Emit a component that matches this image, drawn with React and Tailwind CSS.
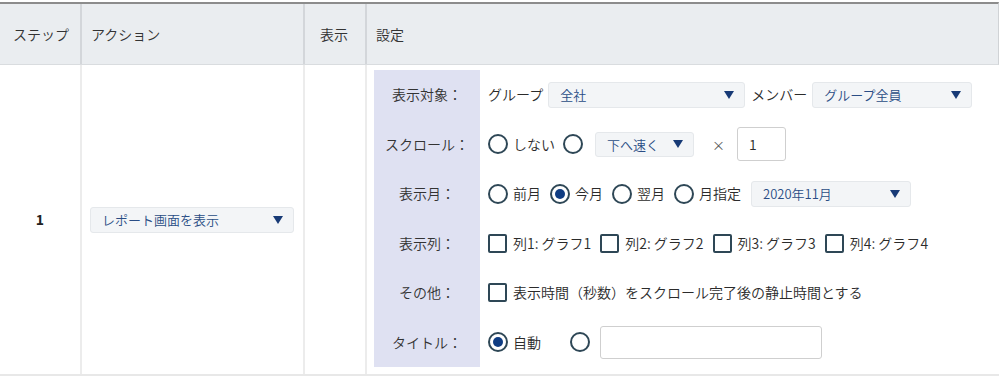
import React from 'react'

const font = { fontFamily: '"Noto Sans CJK JP", "Noto Sans", sans-serif' }

function Caret() {
  return (
    <svg width="10" height="8" viewBox="0 0 10 8" className="shrink-0">
      <path d="M0 0 H10 L5 8 Z" fill="#173a76" />
    </svg>
  )
}

function Select({ label, className }) {
  return (
    <div
      className={`flex items-center justify-between pl-[11px] pr-[10px] bg-[#f3f5f7] border border-[#e5e8eb] rounded-[3px] text-[13px] text-[#2a4d85] ${className}`}
    >
      <span>{label}</span>
      <Caret />
    </div>
  )
}

function Radio({ checked }) {
  return (
    <span className="w-[20px] h-[20px] rounded-full border-[2.5px] border-[#2e4756] flex items-center justify-center shrink-0">
      {checked && <span className="w-[10px] h-[10px] rounded-full bg-[#0f3c82]" />}
    </span>
  )
}

function Check() {
  return <span className="w-[19px] h-[19px] border-[2.5px] border-[#2e4756] rounded-[2px] shrink-0" />
}

function Row({ label, children }) {
  return (
    <div className="flex h-[49.5px]">
      <div className="w-[106px] shrink-0 bg-[#dfe1f2] flex items-center justify-center text-[14px] text-[#333]">
        {label}
      </div>
      <div className="flex items-center pl-[8px] text-[14px] text-[#2b2b2b]">{children}</div>
    </div>
  )
}

export default function App() {
  return (
    <div className="w-[1000px] h-[380px] bg-white pt-[2px] overflow-hidden font-[350]" style={font}>
      <div className="w-[999px]">
        {/* header */}
        <div className="flex h-[63px] border-t-2 border-[#8c8c8c] border-b border-b-[#d9dcdf] bg-[#eaedf0] text-[14px] text-[#333] border-r border-r-[#d0d3d6]">
          <div className="w-[80px] flex items-center pl-[13px]">ステップ</div>
          <div className="w-[223px] flex items-center pl-[9px] border-l-2 border-[#d3d6da]">アクション</div>
          <div className="w-[62px] flex items-center pl-[15px] border-l-2 border-[#d3d6da]">表示</div>
          <div className="flex-1 flex items-center pl-[9px] border-l-2 border-[#d3d6da]">設定</div>
        </div>

        {/* body */}
        <div className="flex h-[311px] border-b-2 border-[#e8e8e8]">
          <div className="w-[80px] flex items-center justify-center font-bold text-[14px] text-[#222]">1</div>
          <div className="w-[223px] flex items-center pl-[8px] border-l-2 border-[#ececec]">
            <Select label="レポート画面を表示" className="w-[204px] h-[26px]" />
          </div>
          <div className="w-[62px] border-l-2 border-[#ececec]" />
          <div className="flex-1 border-l-2 border-[#ececec] pl-[7px] pt-[5px]">
            <div className="flex flex-col">
              <Row label="表示対象：">
                <span>グループ</span>
                <Select label="全社" className="ml-[5px] w-[197px] h-[26px]" />
                <span className="ml-[6px]">メンバー</span>
                <Select label="グループ全員" className="ml-[5px] w-[160px] h-[26px]" />
              </Row>
              <Row label="スクロール：">
                <Radio />
                <span className="ml-[5px]">しない</span>
                <span className="ml-[8px]"><Radio /></span>
                <Select label="下へ速く" className="ml-[12px] w-[99px] h-[25px]" />
                <span className="ml-[18px] text-[13px] text-[#555]">×</span>
                <div className="ml-[12px] w-[49px] h-[34px] border border-[#cfcfcf] rounded-[3px] flex items-center pl-[11px] text-[14px]">1</div>
              </Row>
              <Row label="表示月：">
                <Radio />
                <span className="ml-[5px]">前月</span>
                <span className="ml-[9px]"><Radio checked /></span>
                <span className="ml-[5px]">今月</span>
                <span className="ml-[9px]"><Radio /></span>
                <span className="ml-[5px]">翌月</span>
                <span className="ml-[9px]"><Radio /></span>
                <span className="ml-[5px]">月指定</span>
                <Select label="2020年11月" className="ml-[10px] w-[160px] h-[26px]" />
              </Row>
              <Row label="表示列：">
                {[1, 2, 3, 4].map((n) => (
                  <span key={n} className="flex items-center mr-[9px]">
                    <Check />
                    <span className="ml-[6px]">列{n}: グラフ{n}</span>
                  </span>
                ))}
              </Row>
              <Row label="その他：">
                <Check />
                <span className="ml-[6px]">表示時間（秒数）をスクロール完了後の静止時間とする</span>
              </Row>
              <Row label="タイトル：">
                <Radio checked />
                <span className="ml-[5px]">自動</span>
                <span className="ml-[29px]"><Radio /></span>
                <div className="ml-[10px] w-[222px] h-[33px] border border-[#cfcfcf] rounded-[3px]" />
              </Row>
            </div>
          </div>
        </div>
      </div>
    </div>
  )
}
